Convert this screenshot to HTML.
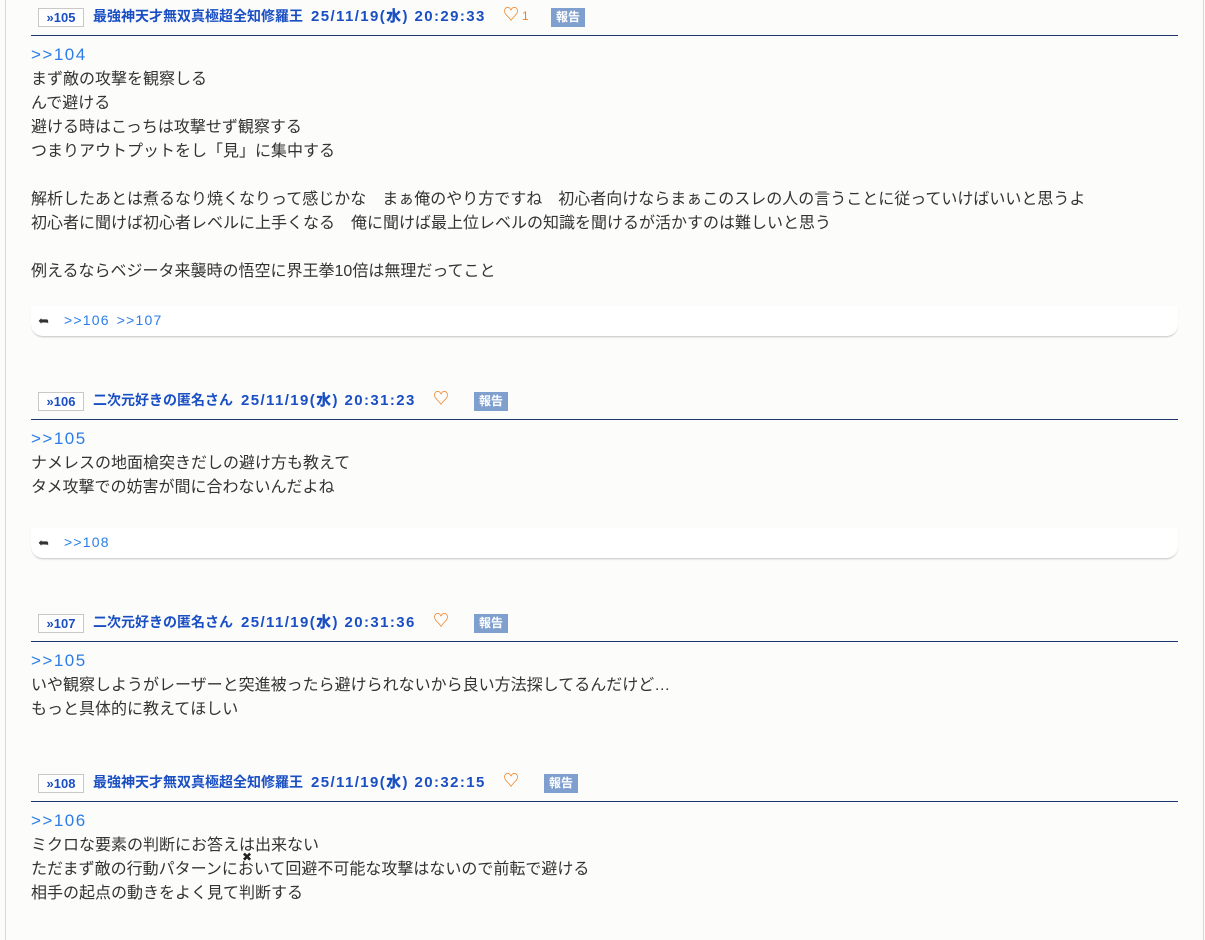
<!DOCTYPE html>
<html><head><meta charset="utf-8"><style>
body{margin:0;width:1205px;height:940px;background:#fcfcfb;position:relative;overflow:hidden;font-family:"Liberation Sans","Noto Sans CJK JP",sans-serif;}
.lb{position:absolute;left:5px;top:0;width:1px;height:940px;background:#d8d8d8}
.rb{position:absolute;left:1203px;top:0;width:1px;height:940px;background:#d8d8d8}
.p{position:absolute;left:0;width:1205px}
.num{position:absolute;left:38px;top:-9px;width:44px;height:17px;border:1px solid #c8c8c8;background:#fff;color:#1a4fc4;font-size:13px;font-weight:bold;line-height:17px;text-align:center}
.nm{position:absolute;left:93px;top:-10px;color:#1a4fc4;font-size:14px;font-weight:bold;line-height:18px;white-space:nowrap}
.nm b{font-size:15px;letter-spacing:1.4px;margin-left:8px}
.ht{position:absolute;top:-10px;color:#f08020;font-size:16px;line-height:18px;font-weight:bold}
.ht small{font-size:12px;margin-left:3px;font-weight:normal}
.rp{position:absolute;top:-9px;width:34px;height:19px;background:#7f9fcf;color:#fff;font-size:12px;font-weight:bold;line-height:19px;text-align:center}
.hl{position:absolute;left:31px;width:1147px;top:18px;height:1px;background:#1f3570}
.bd{position:absolute;left:31px;top:26px;font-size:16px;line-height:24px;color:#333;white-space:nowrap}
.ref{color:#2a7de8;font-size:17px;letter-spacing:1.5px}
.rbar{position:absolute;left:31px;width:1147px;height:30px;border-bottom:1px solid #d4d4d4;border-radius:0 0 12px 12px;background:#fff;box-shadow:0 1px 1px #e8e8e8}
.rbar span{position:absolute;left:33px;top:6px;color:#2a7de8;font-size:14px;letter-spacing:1.2px;word-spacing:2px}
.rbar i{position:absolute;left:7px;top:7px;font-style:normal;font-size:13px;color:#333;transform:scaleX(-1)}
</style></head><body>
<div class="lb"></div><div class="rb"></div>

<div class="p" style="top:17px">
<div class="num">»105</div>
<div class="nm">最強神天才無双真極超全知修羅王<b>25/11/19(水) 20:29:33</b></div>
<div class="ht" style="left:503px">♡<small>1</small></div>
<div class="rp" style="left:551px">報告</div>
<div class="hl"></div>
<div class="bd"><span class="ref">&gt;&gt;104</span><br>まず敵の攻撃を観察しる<br>んで避ける<br>避ける時はこっちは攻撃せず観察する<br>つまりアウトプットをし「見」に集中する<br><br>解析したあとは煮るなり焼くなりって感じかな　まぁ俺のやり方ですね　初心者向けならまぁこのスレの人の言うことに従っていけばいいと思うよ<br>初心者に聞けば初心者レベルに上手くなる　俺に聞けば最上位レベルの知識を聞けるが活かすのは難しいと思う<br><br>例えるならベジータ来襲時の悟空に界王拳10倍は無理だってこと</div>
</div>
<div class="rbar" style="top:306px"><i>➦</i><span>&gt;&gt;106 &gt;&gt;107</span></div>

<div class="p" style="top:401px">
<div class="num">»106</div>
<div class="nm">二次元好きの匿名さん<b>25/11/19(水) 20:31:23</b></div>
<div class="ht" style="left:433px">♡</div>
<div class="rp" style="left:474px">報告</div>
<div class="hl"></div>
<div class="bd"><span class="ref">&gt;&gt;105</span><br>ナメレスの地面槍突きだしの避け方も教えて<br>タメ攻撃での妨害が間に合わないんだよね</div>
</div>
<div class="rbar" style="top:528px"><i>➦</i><span>&gt;&gt;108</span></div>

<div class="p" style="top:623px">
<div class="num">»107</div>
<div class="nm">二次元好きの匿名さん<b>25/11/19(水) 20:31:36</b></div>
<div class="ht" style="left:433px">♡</div>
<div class="rp" style="left:474px">報告</div>
<div class="hl"></div>
<div class="bd"><span class="ref">&gt;&gt;105</span><br>いや観察しようがレーザーと突進被ったら避けられないから良い方法探してるんだけど…<br>もっと具体的に教えてほしい</div>
</div>

<div class="p" style="top:783px">
<div class="num">»108</div>
<div class="nm">最強神天才無双真極超全知修羅王<b>25/11/19(水) 20:32:15</b></div>
<div class="ht" style="left:503px">♡</div>
<div class="rp" style="left:544px">報告</div>
<div class="hl"></div>
<div class="bd"><span class="ref">&gt;&gt;106</span><br>ミクロな要素の判断にお答えは出来ない<br>ただまず敵の行動パターンにおいて回避不可能な攻撃はないので前転で避ける<br>相手の起点の動きをよく見て判断する</div>
</div>
<div style="position:absolute;left:242px;top:850px;font-size:12px;color:#222;line-height:14px">✖</div>
</body></html>
